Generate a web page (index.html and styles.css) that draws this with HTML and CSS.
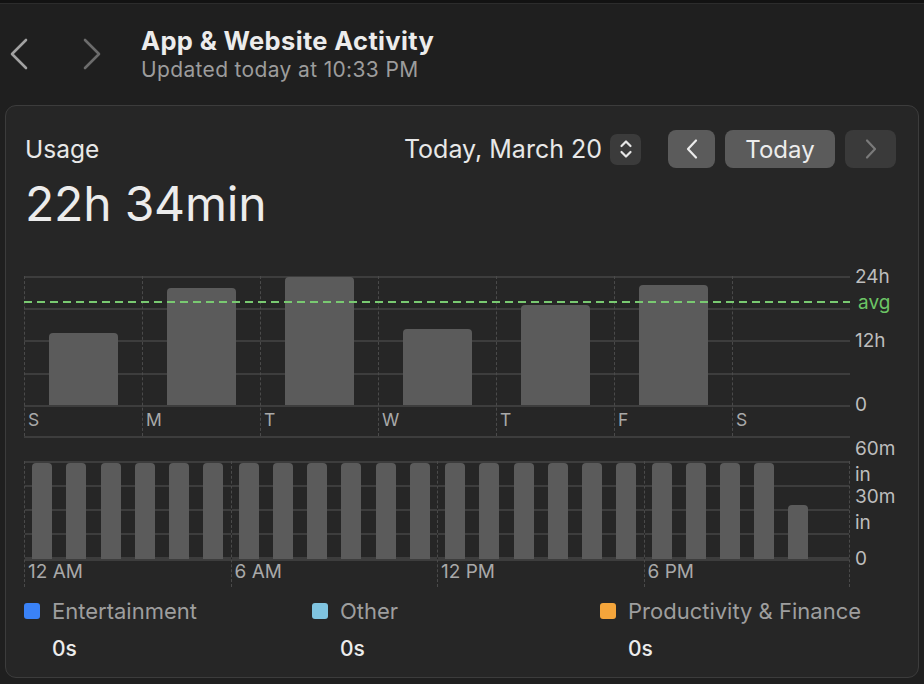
FILE: index.html
```html
<!DOCTYPE html>
<html lang="en">
<head>
<meta charset="utf-8">
<title>App &amp; Website Activity</title>
<link rel="stylesheet" href="styles.css">
</head>
<body>
<div class="topstrip"></div>
<header class="head">
  <div class="navarrows">
    <svg class="chev back" width="20" height="32" viewBox="0 0 20 32"><polyline points="17,2 3,16 17,30" fill="none" stroke="#a2a2a2" stroke-width="2.6" stroke-linecap="round" stroke-linejoin="round"/></svg>
    <svg class="chev fwd" width="20" height="32" viewBox="0 0 20 32"><polyline points="3,2 17,16 3,30" fill="none" stroke="#6c6c6c" stroke-width="2.6" stroke-linecap="round" stroke-linejoin="round"/></svg>
  </div>
  <div class="titles">
    <h1 class="title">App &amp; Website Activity</h1>
    <p class="subtitle">Updated today at 10:33 PM</p>
  </div>
</header>

<section class="card">
  <div class="cardtop">
    <div class="usage">
      <div class="usage-label">Usage</div>
      <div class="usage-total">22h 34min</div>
    </div>
    <div class="controls">
      <div class="datepick">
        <span class="datetext">Today, March 20</span>
        <span class="stepper">
          <svg width="14" height="22" viewBox="0 0 14 22"><polyline points="2.5,8 7,3.5 11.5,8" fill="none" stroke="#e6e6e6" stroke-width="2.2" stroke-linecap="round" stroke-linejoin="round"/><polyline points="2.5,14 7,18.5 11.5,14" fill="none" stroke="#e6e6e6" stroke-width="2.2" stroke-linecap="round" stroke-linejoin="round"/></svg>
        </span>
      </div>
      <div class="navbtns">
        <button class="btn prev"><svg width="14" height="22" viewBox="0 0 14 22"><polyline points="11,2.5 3,11 11,19.5" fill="none" stroke="#ececec" stroke-width="2.2" stroke-linecap="round" stroke-linejoin="round"/></svg></button>
        <button class="btn today">Today</button>
        <button class="btn next"><svg width="14" height="22" viewBox="0 0 14 22"><polyline points="3,2.5 11,11 3,19.5" fill="none" stroke="#7a7a7a" stroke-width="2.2" stroke-linecap="round" stroke-linejoin="round"/></svg></button>
      </div>
    </div>
  </div>

  <div class="chart weekly">
    <div class="week">
      <div class="day"><div class="barzone"><div class="wbar" style="height:72px"></div></div><div class="dlabel">S</div></div>
      <div class="day"><div class="barzone"><div class="wbar" style="height:117px"></div></div><div class="dlabel">M</div></div>
      <div class="day"><div class="barzone"><div class="wbar" style="height:128px"></div></div><div class="dlabel">T</div></div>
      <div class="day"><div class="barzone"><div class="wbar" style="height:76px"></div></div><div class="dlabel">W</div></div>
      <div class="day"><div class="barzone"><div class="wbar" style="height:100px"></div></div><div class="dlabel">T</div></div>
      <div class="day"><div class="barzone"><div class="wbar" style="height:120px"></div></div><div class="dlabel">F</div></div>
      <div class="day"><div class="barzone"></div><div class="dlabel">S</div></div>
      <div class="avgline"></div>
    </div>
    <div class="axis waxis">
      <span class="tick t24">24h</span>
      <span class="tick tavg">avg</span>
      <span class="tick t12">12h</span>
      <span class="tick t0">0</span>
    </div>
  </div>

  <div class="chart hourly">
    <div class="hours">
      <div class="seg">
        <div class="hbars">
          <div class="hcol"><div class="hbar" style="height:96px"></div></div>
          <div class="hcol"><div class="hbar" style="height:96px"></div></div>
          <div class="hcol"><div class="hbar" style="height:96px"></div></div>
          <div class="hcol"><div class="hbar" style="height:96px"></div></div>
          <div class="hcol"><div class="hbar" style="height:96px"></div></div>
          <div class="hcol"><div class="hbar" style="height:96px"></div></div>
        </div>
        <div class="hlabel">12 AM</div>
      </div>
      <div class="seg">
        <div class="hbars">
          <div class="hcol"><div class="hbar" style="height:96px"></div></div>
          <div class="hcol"><div class="hbar" style="height:96px"></div></div>
          <div class="hcol"><div class="hbar" style="height:96px"></div></div>
          <div class="hcol"><div class="hbar" style="height:96px"></div></div>
          <div class="hcol"><div class="hbar" style="height:96px"></div></div>
          <div class="hcol"><div class="hbar" style="height:96px"></div></div>
        </div>
        <div class="hlabel">6 AM</div>
      </div>
      <div class="seg">
        <div class="hbars">
          <div class="hcol"><div class="hbar" style="height:96px"></div></div>
          <div class="hcol"><div class="hbar" style="height:96px"></div></div>
          <div class="hcol"><div class="hbar" style="height:96px"></div></div>
          <div class="hcol"><div class="hbar" style="height:96px"></div></div>
          <div class="hcol"><div class="hbar" style="height:96px"></div></div>
          <div class="hcol"><div class="hbar" style="height:96px"></div></div>
        </div>
        <div class="hlabel">12 PM</div>
      </div>
      <div class="seg">
        <div class="hbars">
          <div class="hcol"><div class="hbar" style="height:96px"></div></div>
          <div class="hcol"><div class="hbar" style="height:96px"></div></div>
          <div class="hcol"><div class="hbar" style="height:96px"></div></div>
          <div class="hcol"><div class="hbar" style="height:96px"></div></div>
          <div class="hcol"><div class="hbar" style="height:54px"></div></div>
          <div class="hcol"></div>
        </div>
        <div class="hlabel">6 PM</div>
      </div>
    </div>
    <div class="axis haxis">
      <span class="tick h60">60m<br>in</span>
      <span class="tick h30">30m<br>in</span>
      <span class="tick h0">0</span>
    </div>
  </div>

  <div class="legend">
    <div class="litem">
      <div class="lhead"><span class="swatch blue"></span><span class="lname">Entertainment</span></div>
      <div class="lval">0s</div>
    </div>
    <div class="litem">
      <div class="lhead"><span class="swatch sky"></span><span class="lname">Other</span></div>
      <div class="lval">0s</div>
    </div>
    <div class="litem">
      <div class="lhead"><span class="swatch orange"></span><span class="lname">Productivity &amp; Finance</span></div>
      <div class="lval">0s</div>
    </div>
  </div>
</section>
</body>
</html>
```

FILE: styles.css
```css
* { box-sizing: border-box; }

html, body {
  margin: 0;
  padding: 0;
}

body {
  width: 924px;
  height: 684px;
  overflow: hidden;
  background: #1f1f1f;
  color: #e6e6e6;
  font-family: Inter, "Noto Sans", "Liberation Sans", sans-serif;
}

.topstrip {
  height: 4px;
  background: #121212;
  border-bottom: 1px solid #2c2c2c;
}

/* ---------- header ---------- */
.head {
  display: flex;
  align-items: flex-start;
  padding: 21px 0 0 9px;
  height: 101px;
}

.navarrows {
  display: flex;
  gap: 53px;
  padding-top: 13px;
}

.chev { display: block; }

.titles {
  margin-left: 39px;
}

.title {
  margin: 0;
  font-size: 25.5px;
  font-weight: 700;
  line-height: 31px;
  color: #ececec;
  letter-spacing: 0.35px;
}

.subtitle {
  margin: 0;
  font-size: 21px;
  line-height: 27px;
  color: #9c9c9c;
  letter-spacing: 0.35px;
}

/* ---------- card ---------- */
.card {
  margin: 0 5px;
  height: 573px;
  background: #262626;
  border: 1px solid #3c3c3c;
  border-radius: 11px;
  padding: 0 0 0 18px;
}

.cardtop {
  display: flex;
  justify-content: space-between;
  align-items: flex-start;
  padding: 24px 22px 0 1px;
}

.usage-label {
  font-size: 24.5px;
  line-height: 38px;
  color: #e8e8e8;
}

.usage-total {
  margin-top: 6px;
  font-size: 48px;
  line-height: 60px;
  color: #ececec;
  letter-spacing: -0.2px;
}

.controls {
  display: flex;
  align-items: center;
  gap: 27px;
}

.datepick {
  display: flex;
  align-items: center;
  gap: 8px;
}

.datetext {
  font-size: 25px;
  color: #e8e8e8;
}

.stepper {
  width: 31px;
  height: 31px;
  border-radius: 7px;
  background: #3b3b3b;
  display: flex;
  align-items: center;
  justify-content: center;
}

.navbtns {
  display: flex;
  gap: 10px;
}

.btn {
  height: 38px;
  border: 0;
  border-radius: 8px;
  background: #5b5b5b;
  color: #ececec;
  font-family: inherit;
  display: flex;
  align-items: center;
  justify-content: center;
  padding: 0;
}

.btn.prev { width: 47px; }
.btn.today { width: 110px; font-size: 24px; }
.btn.next { width: 51px; background: #3a3a3a; }

/* ---------- charts ---------- */
.chart {
  display: flex;
}

.axis {
  position: relative;
  flex: 1;
  color: #bdbdbd;
  font-size: 19px;
}

.tick {
  position: absolute;
  left: 5px;
  line-height: 22px;
  transform: translateY(-50%);
}

/* weekly */
.weekly {
  margin-top: 42px;
}

.week {
  position: relative;
  width: 826px;
  display: grid;
  grid-template-columns: repeat(7, 1fr);
  background: repeating-linear-gradient(to bottom, #3d3d3d 0 2px, transparent 2px 32.25px) top left / 100% 131px no-repeat;
  border-bottom: 2px solid #3d3d3d;
}

.day {
  border-left: 1.5px dashed #4a4a4a;
  display: flex;
  flex-direction: column;
}

.day:last-of-type { border-right: 1.5px dashed #4a4a4a; }

.barzone {
  height: 131px;
  padding: 2px 24px 2px 23.5px;
  display: flex;
  align-items: flex-end;
}

.wbar {
  width: 100%;
  background: #5b5b5b;
  border-radius: 4px 4px 0 0;
}

.dlabel {
  height: 29px;
  padding-left: 3px;
  font-size: 17.5px;
  line-height: 26px;
  color: #a9a9a9;
}

.avgline {
  position: absolute;
  left: 0;
  right: 0;
  top: 25px;
  height: 2px;
  background: repeating-linear-gradient(to right, #79c971 0 8px, transparent 8px 13px);
}

.waxis .t24 { top: 1px; }
.waxis .tavg { top: 27px; left: 8px; color: #6cc565; }
.waxis .t12 { top: 65px; }
.waxis .t0 { top: 129px; }

/* hourly */
.hourly {
  margin-top: 23px;
}

.hours {
  width: 826px;
  display: grid;
  grid-template-columns: repeat(4, 1fr);
}

.seg {
  border-left: 1.5px dashed #4a4a4a;
  display: flex;
  flex-direction: column;
}

.seg:last-child { border-right: 1.5px dashed #4a4a4a; }

.hbars {
  height: 98px;
  display: grid;
  grid-template-columns: repeat(6, 1fr);
  background: repeating-linear-gradient(to bottom, #3d3d3d 0 2px, transparent 2px 24px) top left / 100% 100% no-repeat;
  border-bottom: 2px solid #3d3d3d;
  box-sizing: content-box;
}

.hcol {
  display: flex;
  align-items: flex-end;
  justify-content: center;
  padding-top: 1px;
}

.hbar {
  width: 20px;
  background: #5b5b5b;
  border-radius: 4px 4px 0 0;
}

.hlabel {
  height: 26px;
  padding-left: 3px;
  font-size: 19px;
  line-height: 22px;
  color: #a9a9a9;
}

.haxis .tick { line-height: 26px; }
.haxis .h60 { top: 1px; }
.haxis .h30 { top: 49px; }
.haxis .h0 { top: 98px; }

/* ---------- legend ---------- */
.legend {
  display: grid;
  grid-template-columns: 288px 288px 288px;
  margin-top: 11px;
}

.lhead {
  display: flex;
  align-items: center;
  gap: 12px;
}

.swatch {
  width: 16px;
  height: 16px;
  border-radius: 3px;
  flex: none;
}

.swatch.blue { background: #3a82f7; }
.swatch.sky { background: #80c4e0; }
.swatch.orange { background: #f4a53b; }

.lname {
  font-size: 22px;
  line-height: 26px;
  color: #9e9e9e;
}

.lval {
  margin: 12px 0 0 28px;
  font-size: 21px;
  font-weight: 500;
  line-height: 26px;
  color: #ececec;
}
```
